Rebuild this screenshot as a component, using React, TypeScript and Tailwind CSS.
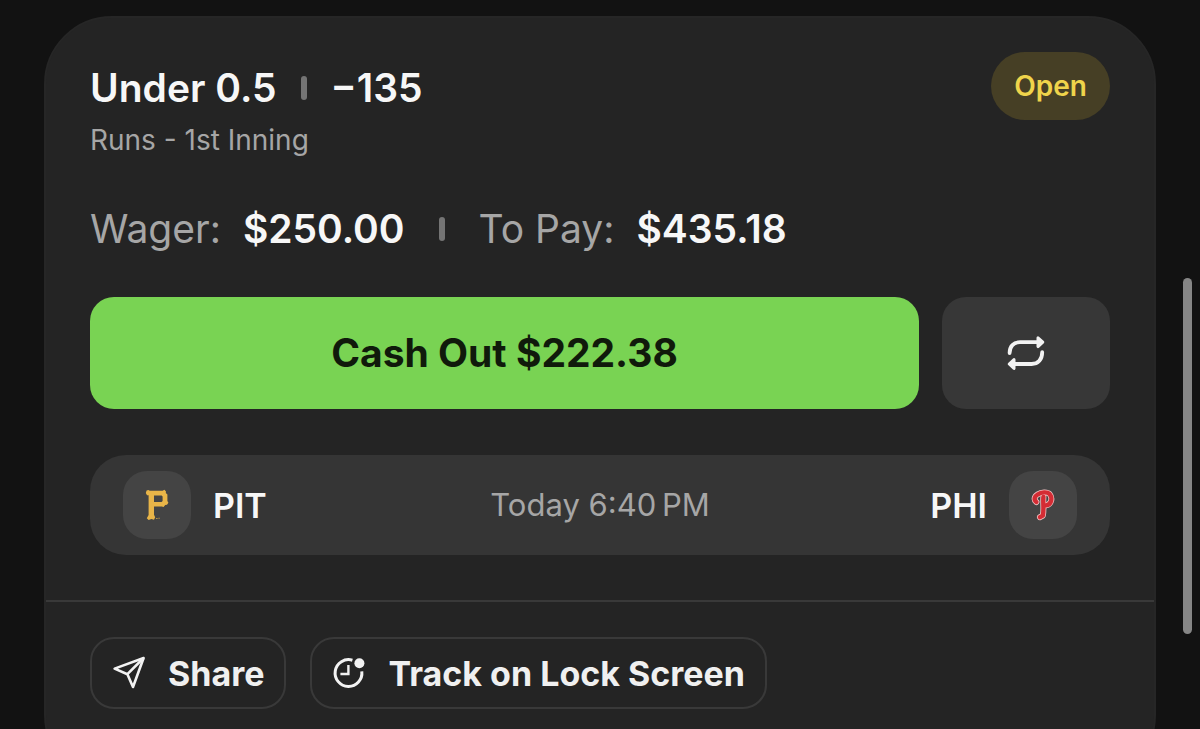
import type { ReactNode } from "react";

type Team = {
  code: string;
  logo: ReactNode;
};

function PiratesLogo() {
  return (
    <svg viewBox="0 0 24 32" className="h-8 w-6" fill="#e9b548" aria-hidden="true">
      <path
        fillRule="evenodd"
        d="M1.6 1.6 L3.4 1 L4.8 1.8 H17.6 L19.4 .8 L21 2.4 L20.8 4 L22.4 5.6 V12 L23.4 13.8 L22 15.8 L20.2 16 L18.6 18 L16.8 17.6 H9 V25.8 L10.2 28.2 L9 30.8 L6.4 30 L3.6 31 L1.8 29.2 L3.6 26 V6.2 H2 L.8 4 Z M9 6.6 V13 H16.6 L17.6 12 V7.6 L16.6 6.6 Z"
      />
      <path d="M11 29h1.6v1H11zM13.4 28.8h1.4v1h-1.4z" opacity=".7" />
    </svg>
  );
}

function PhilliesLogo() {
  return (
    <svg viewBox="0 0 24 32" className="h-8 w-6" fill="none" strokeLinecap="round" strokeLinejoin="round" aria-hidden="true">
      <g stroke="#f0c4c4" strokeWidth="6">
        <path d="M5.4 13 C2.6 11 3.2 7.4 6.8 5.4 C10 3 16.4 2.6 18.6 5 C21.8 9 20.6 15.4 15 16.4" />
        <path d="M12.4 8 C11.8 14 13.2 21 11.8 26.6 L9 28.2" />
      </g>
      <g stroke="#d42c34" strokeWidth="4.4">
        <path d="M5.4 13 C2.6 11 3.2 7.4 6.8 5.4 C10 3 16.4 2.6 18.6 5 C21.8 9 20.6 15.4 15 16.4" />
        <path d="M12.4 8 C11.8 14 13.2 21 11.8 26.6 L9 28.2" />
      </g>
    </svg>
  );
}

function RepeatIcon() {
  return (
    <svg viewBox="0 0 40 36" className="h-9 w-10" fill="none" stroke="#f2f2f2" strokeWidth="3.8" strokeLinecap="round" strokeLinejoin="round" aria-hidden="true">
      <path d="M3.6 18 C3.6 11.4 7.6 7.2 14 7.2 H34" />
      <path d="M32 2.8 L36.8 7.2 L32 11.6 Z" fill="#f2f2f2" strokeWidth="3" />
      <path d="M36.2 17.2 C36.2 24.4 32.2 29 25.6 29 H6" />
      <path d="M8 24.6 L3.2 29 L8 33.4 Z" fill="#f2f2f2" strokeWidth="3" />
    </svg>
  );
}

function ShareIcon() {
  return (
    <svg viewBox="0 0 34 34" className="size-[34px]" fill="none" stroke="#f2f2f2" strokeWidth="2.6" strokeLinejoin="round" aria-hidden="true">
      <path d="M31.6 2 L2.6 12.6 L15.4 18.2 L21 31 Z" />
      <path d="M31.6 2 L15.4 18.2" />
    </svg>
  );
}

function TrackIcon() {
  return (
    <svg viewBox="0 0 34 34" className="size-[34px]" fill="none" stroke="#f2f2f2" strokeWidth="3" aria-hidden="true">
      <path d="M20.4 4.2 A13.4 13.4 0 1 0 29.8 15.4" />
      <path d="M16.4 9 V18 H8.4" strokeWidth="2.4" />
      <circle cx="27.4" cy="7.2" r="5" fill="#f2f2f2" stroke="none" />
    </svg>
  );
}

const AWAY: Team = { code: "PIT", logo: <PiratesLogo /> };
const HOME: Team = { code: "PHI", logo: <PhilliesLogo /> };

const ACTIONS = [
  { label: "Share", icon: <ShareIcon /> },
  { label: "Track on Lock Screen", icon: <TrackIcon /> },
];

function Separator() {
  return <span className="h-6 w-[6px] shrink-0 rounded-[3px] bg-[#747474]" />;
}

function TeamLogo({ team }: { team: Team }) {
  return (
    <span className="flex size-[68px] items-center justify-center rounded-3xl bg-[#444444]">
      {team.logo}
    </span>
  );
}

export default function App() {
  return (
    <main className="relative h-screen overflow-hidden bg-[#121212] px-11 pt-4 font-['Inter',sans-serif] text-[#f7f7f7]">
      <article className="rounded-[68px] border-2 border-[#262626] bg-[#242424]">
        <div className="px-11 pt-[34px] pb-[45px]">
          <header className="flex items-start justify-between">
            <div className="pt-3">
              <h1 className="flex items-center gap-6 text-[39px] leading-[48px] font-semibold">
                <span>Under 0.5</span>
                <Separator />
                <span>−135</span>
              </h1>
              <p className="mt-2 text-[28px] leading-10 text-[#a6a6a6]">Runs - 1st Inning</p>
            </div>
            <span className="flex h-[68px] items-center rounded-full bg-[#463f25] px-[23px] text-[28px] font-semibold text-[#efd44b]">
              Open
            </span>
          </header>

          <dl className="mt-[45px] flex items-center text-[39px] leading-[48px]">
            <dt className="text-[#a6a6a6]">Wager:</dt>
            <dd className="ml-[22px] font-semibold">$250.00</dd>
            <span className="mx-[34px] flex">
              <Separator />
            </span>
            <dt className="text-[#a6a6a6]">To Pay:</dt>
            <dd className="ml-[22px] font-semibold">$435.18</dd>
          </dl>

          <div className="mt-11 flex gap-[23px]">
            <button type="button" className="h-28 flex-1 rounded-3xl bg-[#79d353] text-[39px] font-bold text-[#101a0b]">
              Cash Out $222.38
            </button>
            <button type="button" aria-label="Repeat bet" className="flex h-28 w-[168px] items-center justify-center rounded-3xl bg-[#373737]">
              <RepeatIcon />
            </button>
          </div>

          <div className="mt-[46px] grid h-[100px] grid-cols-[1fr_auto_1fr] items-center rounded-[36px] bg-[#353535] px-[33px]">
            <div className="flex items-center gap-[22px] text-[34px] font-semibold">
              <TeamLogo team={AWAY} />
              {AWAY.code}
            </div>
            <time className="text-[31px] text-[#a6a6a6]">Today 6:40{"\u202f"}PM</time>
            <div className="flex items-center justify-end gap-[22px] text-[34px] font-semibold">
              {HOME.code}
              <TeamLogo team={HOME} />
            </div>
          </div>
        </div>

        <footer className="flex gap-6 border-t-2 border-[#393939] px-11 pt-[35px] pb-[72px]">
          {ACTIONS.map((a) => (
            <button
              key={a.label}
              type="button"
              className="flex h-[72px] items-center gap-[22px] rounded-3xl border-2 border-[#393939] px-5 text-[34px] font-bold text-[#f0f0f0]"
            >
              {a.icon}
              {a.label}
            </button>
          ))}
        </footer>
      </article>

      {/* scroll indicator */}
      <div className="absolute top-[278px] right-2 h-[356px] w-[9px] rounded-full bg-[#868686]" />
    </main>
  );
}
